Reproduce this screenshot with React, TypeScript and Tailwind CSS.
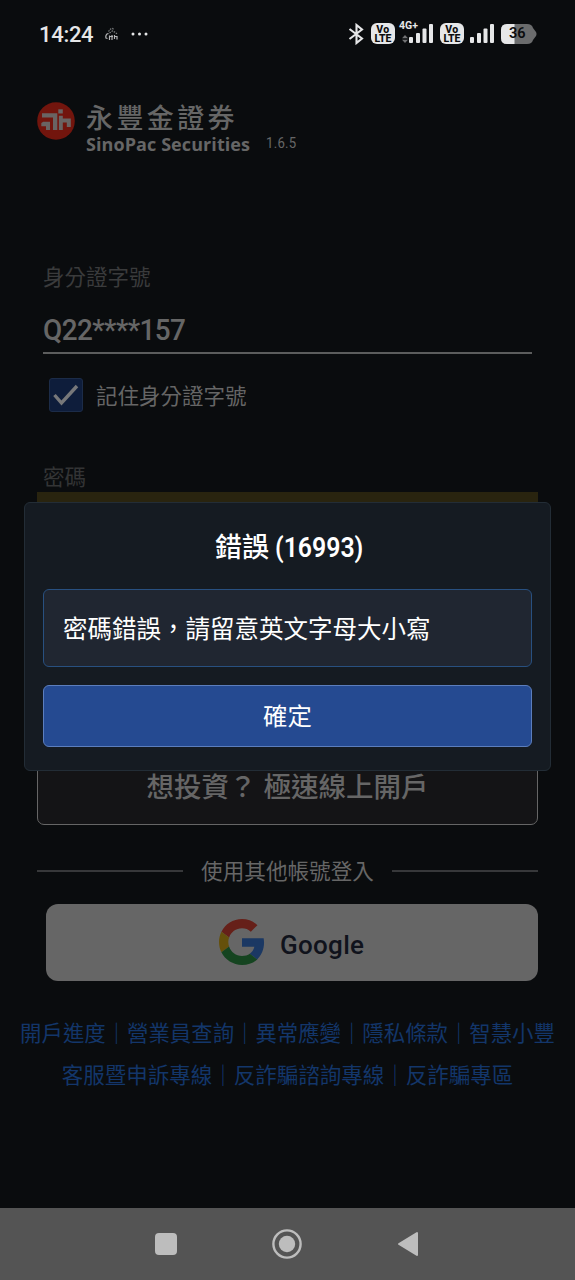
import React from "react";

const base = "font-['Roboto','Noto_Sans_CJK_TC',sans-serif]";

function VoLte() {
  return (
    <div className="flex h-[21px] w-6 flex-col items-center justify-center rounded-[6px] bg-[#e6e7e8] text-[10.5px] font-extrabold text-[#0b0c0e]">
      <span className="h-[9px] leading-[9px] tracking-[0.5px]">Vo</span>
      <span className="h-[9px] leading-[9px]">LTE</span>
    </div>
  );
}

function Signal() {
  return (
    <svg width="25" height="20" viewBox="0 0 25 20" fill="#e6e7e8">
      <rect x="0" y="13" width="4" height="6" rx="1" />
      <rect x="7" y="9" width="4" height="10" rx="1" />
      <rect x="13.5" y="4.5" width="4" height="14.5" rx="1" />
      <rect x="20" y="0" width="4" height="19" rx="1" />
    </svg>
  );
}

function StatusBar() {
  return (
    <header className="flex h-[67px] items-center pl-[39px] text-[#e6e7e8]">
      <span className="mt-[2px] w-[56px] text-[22px] font-medium leading-none tracking-[-0.3px]">14:24</span>
      <svg className="ml-[10px]" width="14" height="14" viewBox="0 0 14 14" fill="none" stroke="#b5b6b7" strokeWidth="1.2">
        <path d="M3.500 6.500L2 7Q.3 8.500 1 11l1.500.5M4.500 8.500V13M4.500 9.500h3.500M7 8v5M9.500 8v4M9.500 9.500h2.500v3" />
        <path d="M3.500 4.500l2-2.500 2-.5 1.500 1M4.500 6l3-2 3 1.500 1.500 1.500" strokeDasharray="1.5 1" opacity=".7" />
      </svg>
      <svg className="ml-3" width="17" height="4" fill="#e6e7e8">
        <circle cx="2" cy="2" r="1.5" />
        <circle cx="8.500" cy="2" r="1.500" />
        <circle cx="15" cy="2" r="1.5" />
      </svg>
      <svg className="ml-[200px]" width="16" height="22" viewBox="0 0 16 22" fill="none" stroke="#e6e7e8" strokeWidth="2.1">
        <path d="M1.500 6L14 15.500 8.500 20V2L14 6.500 1.500 16" />
      </svg>
      <div className="ml-[7px]"><VoLte /></div>
      <div className="relative ml-[3px] flex h-[21px] w-[36px] items-end justify-end">
        <span className="absolute left-[1px] top-[-2px] text-[10.5px] font-bold leading-none">4G+</span>
        <svg className="absolute bottom-[1px] left-[4px]" width="6" height="8" fill="#717274">
          <path d="M0 3.300L3 0l3 3.300zM0 4.700L3 8l3-3.300z" />
        </svg>
        <Signal />
      </div>
      <div className="ml-[6px]"><VoLte /></div>
      <div className="ml-[6px] flex h-[21px] items-end"><Signal /></div>
      <div className="relative ml-[6px] flex h-5 w-9 items-center">
        <svg className="absolute inset-0" width="36" height="20" viewBox="0 0 36 20">
          <path d="M6 0h20q5 0 6 4l3 4q1 2 0 4L32 16q-1 4-6 4H6q-6 0-6-6V6q0-6 6-6z" fill="#6b6c6d" />
          <path d="M13.500 0H6Q0 0 0 6v8q0 6 6 6h7.500z" fill="#e6e7e8" />
        </svg>
        <span className="relative ml-[8px] mt-[2px] text-[14.5px] font-semibold leading-none text-[#0b0c0e]">36</span>
      </div>
    </header>
  );
}

function Brand() {
  return (
    <div className="flex h-[63px] items-start pl-[37px] pt-[35px]">
      <svg width="38" height="38" viewBox="0 0 38 38">
        <circle cx="19" cy="19" r="18.800" fill="#72150d" />
        <g fill="#696463">
          <path d="M5 11.200h15.300V28H16V15.500H5z" />
          <path d="M4.300 24.300V21l2-1.200H13V28H9v-3.700z" />
          <path d="M21.300 7.300h4.500v4.200h-4.500z" />
          <path d="M21.900 13.800h3.900v2.700h8V25h-4v-4.500h-4V28h-3.900z" />
        </g>
      </svg>
      <div className="ml-[11px] flex w-[180px] flex-col text-[#666]">
        <span className="mt-[1px] text-[27px] font-medium leading-[33px] tracking-[3.4px]">永豐金證券</span>
        <span className="whitespace-nowrap font-['Open_Sans'] text-[18px] font-bold leading-[17px] tracking-[0.080px]">SinoPac Securities</span>
      </div>
      <span className="mt-[32px] inline-block origin-left scale-x-[0.88] text-[15px] leading-[18px] tracking-[0.3px] text-[#666]">1.6.5</span>
    </div>
  );
}

function LoginForm() {
  return (
    <section className="flex flex-col text-[#666]">
      <div className="mx-[43px] mt-[132px] flex h-[92px] flex-col border-b-2 border-[#5c5d5d]">
        <label className="mt-[1px] text-[21.5px] leading-[30px] text-[#3a3b3c]">身分證字號</label>
        <span className="mt-[20px] origin-left scale-x-[0.93] text-[30px] font-medium leading-[34px] tracking-[-0.6px]">Q22****157</span>
      </div>
      <div className="ml-[49px] mt-[24px] flex h-[34px] items-center gap-[13px]">
        <div className="flex size-[34px] items-center justify-center rounded-[3px] border border-[#1c2c48] bg-[#0e1d3b]">
          <svg width="26" height="22" viewBox="0 0 26 22" fill="none" stroke="#77787a" strokeWidth="3.4">
            <path d="M1.500 11l7 8L24 2" />
          </svg>
        </div>
        <span className="mt-[3px] text-[21.5px] leading-[34px]">記住身分證字號</span>
      </div>
      <span className="ml-[43px] mt-[51px] text-[21.5px] leading-[30px] text-[#333435]">密碼</span>
      <div className="mx-[37px] mt-[-1px] h-[200px] bg-[#29240f]" />
      <div className="mx-[37px] mt-[56px] flex h-[77px] items-center justify-center rounded-[7px] border border-[#666] bg-[#141416] pt-[3px] text-[27.5px] font-medium">
        <span className="whitespace-pre">想投資？ 極速線上開戶</span>
      </div>
    </section>
  );
}

function GoogleMark() {
  return (
    <svg width="46" height="47" viewBox="0 0 48 49">
      <path fill="#662019" d="M24 9.700c3.500 0 6.700 1.200 9.200 3.600l6.900-6.900C35.900 2.400 30.500 0 24 0 14.600 0 6.500 5.400 2.600 13.200l8 6.200C12.400 13.700 17.700 9.700 24 9.700z" />
      <path fill="#1b3863" d="M47 24.600c0-1.600-.2-3.100-.4-4.600H24v9h12.900c-.6 3-2.300 5.500-4.800 7.200l7.700 6c4.500-4.200 7.200-10.400 7.200-17.600z" />
      <path fill="#65500b" d="M10.500 28.600c-.5-1.500-.8-3-.8-4.600s.3-3.100.8-4.600l-8-6.200C.9 16.500 0 20.100 0 24s.9 7.500 2.600 10.800z" />
      <path fill="#154420" d="M24 48c6.500 0 11.900-2.100 15.900-5.800l-7.700-6c-2.200 1.500-4.900 2.300-8.200 2.300-6.300 0-11.600-4.200-13.500-9.900l-8 6.200C6.500 42.600 14.600 48 24 48z" />
    </svg>
  );
}

function OtherLogins() {
  return (
    <section className="flex flex-col">
      <div className="mx-[37px] mt-[31px] flex h-[30px] items-center justify-between text-[#666]">
        <span className="h-[2px] w-[146px] bg-[#37383a]" />
        <span className="mt-[3px] text-[21.6px]">使用其他帳號登入</span>
        <span className="h-[2px] w-[146px] bg-[#37383a]" />
      </div>
      <button className="ml-[46px] mr-[37px] mt-[18px] flex h-[77px] items-center rounded-[12px] bg-[#666] pl-[173px]">
        <GoogleMark />
        <span className="ml-[15px] mt-[6px] text-[26px] font-medium tracking-[0.3px] text-[#10131c]">Google</span>
      </button>
      <nav className="mt-[32px] flex flex-col items-center whitespace-nowrap text-[21.5px] leading-[42px] text-[#13366a]">
        <span className="text-[21.4px]">開戶進度｜營業員查詢｜異常應變｜隱私條款｜智慧小豐</span>
        <span>客服暨申訴專線｜反詐騙諮詢專線｜反詐騙專區</span>
      </nav>
    </section>
  );
}

function ErrorDialog() {
  return (
    <div role="dialog" className="absolute left-[24px] top-[502px] flex h-[269px] w-[527px] flex-col rounded-[6px] border border-[#232d36] bg-[#151b22] px-[18px] text-white">
      <h1 className="mt-[25px] flex pl-[172px] text-[27px] font-medium leading-[40px]">
        <span>錯誤</span>
        <span className="ml-[6px] origin-left scale-x-[0.92] font-semibold">(16993)</span>
      </h1>
      <p className="mt-[21px] flex h-[78px] items-center rounded-[6px] border border-[#285080] bg-[#202631] pl-[19px] pt-[4px] text-[24.5px]">密碼錯誤，請留意英文字母大小寫</p>
      <button className="mt-[18px] flex h-[62px] items-center justify-center rounded-[6px] border border-[#5c7ebd] bg-[#254a91] pt-[3px] text-[24.4px]">確定</button>
    </div>
  );
}

function NavigationBar() {
  return (
    <footer className="mt-auto flex h-[72px] items-center bg-[#545454] pl-[155px]">
      <span className="size-[22px] rounded-[4px] bg-[#bdbdbd]" />
      <svg className="ml-[95px]" width="30" height="30" viewBox="0 0 30 30">
        <circle cx="15" cy="15" r="13.600" fill="none" stroke="#bdbdbd" strokeWidth="2.400" />
        <circle cx="15" cy="15" r="8.200" fill="#bdbdbd" />
      </svg>
      <svg className="ml-[95px]" width="22" height="26" viewBox="0 0 22 26">
        <path d="M2 13L20 2v22z" fill="#bdbdbd" stroke="#bdbdbd" strokeWidth="2" strokeLinejoin="round" />
      </svg>
    </footer>
  );
}

export default function App() {
  return (
    <main lang="zh-Hant" className={"relative flex h-[1280px] w-[575px] flex-col overflow-hidden bg-[#0a0c0e] " + base}>
      <StatusBar />
      <Brand />
      <LoginForm />
      <OtherLogins />
      <NavigationBar />
      <ErrorDialog />
    </main>
  );
}
